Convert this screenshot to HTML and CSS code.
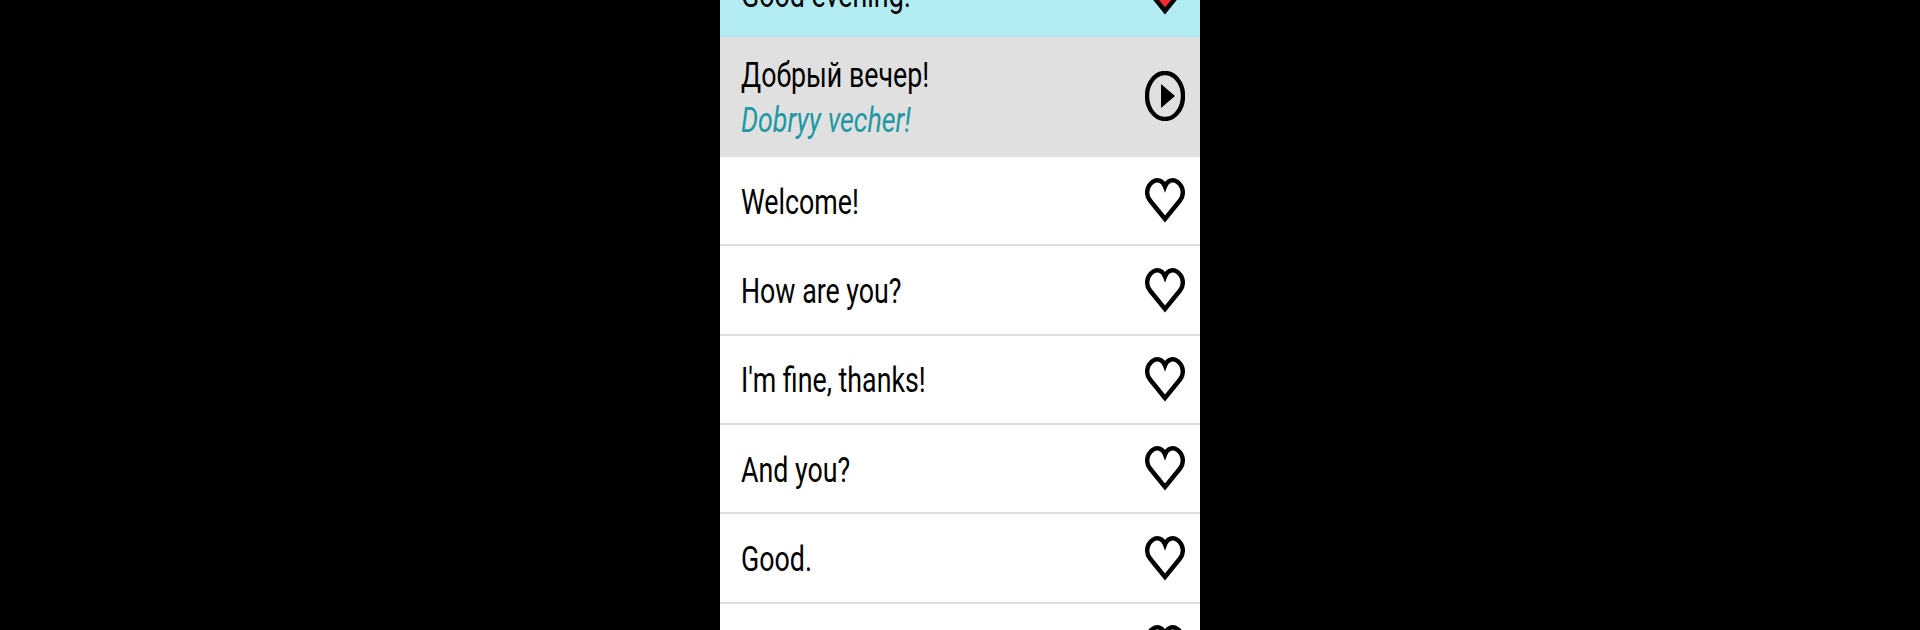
FILE: index.html
```
<!DOCTYPE html>
<html lang="en">
<head>
<meta charset="utf-8">
<title>Phrases</title>
<link rel="stylesheet" href="styles.css">
</head>
<body>
<svg class="defs" width="0" height="0" aria-hidden="true">
  <symbol id="heart" viewBox="0 0 40 47">
    <path d="M20 42 L5 23.5 C0.5 18 1.5 9.5 7.5 5 C12 1.8 17.5 3 20 9.5 C22.5 3 28 1.8 32.5 5 C38.5 9.5 39.5 18 35 23.5 Z"/>
  </symbol>
</svg>
<main class="phone">
  <ul class="list">
    <li class="row row-active">
      <span class="label">Good evening!</span>
      <svg class="icon heart heart-on"><use href="#heart"/></svg>
    </li>
    <li class="row row-open">
      <div class="label-stack">
        <span class="label">Добрый вечер!</span>
        <span class="label translit">Dobryy vecher!</span>
      </div>
      <svg class="icon play" viewBox="0 0 40 50">
        <ellipse class="play-ring" cx="20" cy="25" rx="18" ry="23"/>
        <path class="play-arrow" d="M16 13 L30 25 L16 37 Z"/>
      </svg>
    </li>
    <li class="row"><span class="label">Welcome!</span><svg class="icon heart"><use href="#heart"/></svg></li>
    <li class="row"><span class="label">How are you?</span><svg class="icon heart"><use href="#heart"/></svg></li>
    <li class="row"><span class="label">I'm fine, thanks!</span><svg class="icon heart"><use href="#heart"/></svg></li>
    <li class="row"><span class="label">And you?</span><svg class="icon heart"><use href="#heart"/></svg></li>
    <li class="row"><span class="label">Good.</span><svg class="icon heart"><use href="#heart"/></svg></li>
    <li class="row"><span class="label"></span><svg class="icon heart"><use href="#heart"/></svg></li>
  </ul>
</main>
</body>
</html>
```
FILE: styles.css
```
* { box-sizing: border-box; }
html, body { margin: 0; height: 100%; background: #000; overflow: hidden; }
.defs { display: block; height: 0; }
.phone {
  width: 480px;
  height: 630px;
  margin: 0 auto;
  background: #fff;
  overflow: hidden;
}
.list {
  list-style: none;
  margin: -52.7px 0 0;
  padding: 0;
}
.row {
  display: flex;
  align-items: center;
  justify-content: space-between;
  height: 89.33px;
  padding: 0 15px 0 21px;
  border-bottom: 2px solid #dedede;
  color: #000;
}
.row-active { background: #b2ebf2; border-bottom: 0; }
.row-open { height: 120.4px; background: #e0e0e0; border-bottom: 0; }
.label {
  display: block;
  padding-top: 3px;
  font-family: Roboto, "Liberation Sans", sans-serif;
  font-size: 35px;
  line-height: 41px;
  white-space: nowrap;
  transform: scaleX(0.765);
  transform-origin: left center;
}
.row-active .label { padding-top: 8px; }
.label-stack { margin-bottom: 1px; }
.translit { padding-top: 4px; font-style: italic; color: #1e98a3; }
.icon { display: block; flex: none; width: 40px; height: 47px; }
.heart { fill: none; stroke: #000; stroke-width: 4.4; }
.heart-on { margin-top: 2px; fill: #f5292c; }
.play { height: 50px; margin-bottom: 2px; }
.play-ring { fill: none; stroke: #000; stroke-width: 4.4; }
.play-arrow { fill: #000; }
```
